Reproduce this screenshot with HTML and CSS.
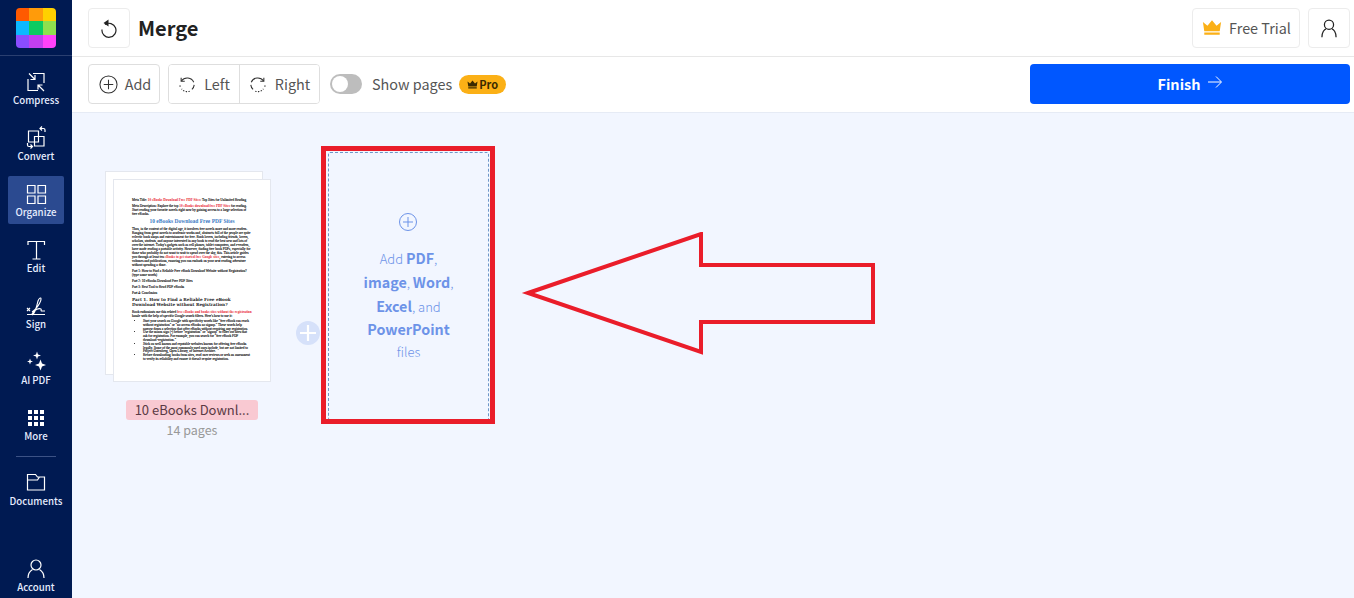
FILE: index.html
```html
<!DOCTYPE html>
<html lang="en">
<head>
    <meta charset="UTF-8">
    <title>Merge</title>
    <link rel="stylesheet" href="styles.css">
</head>
<body>
    <aside class="sidebar">
        <div class="logo-wrap">
            <div class="logo">
                <i class="c1"></i><i class="c2"></i><i class="c3"></i>
                <i class="c4"></i><i class="c5"></i><i class="c6"></i>
                <i class="c7"></i><i class="c8"></i><i class="c9"></i>
            </div>
        </div>
        <nav class="nav">
            <a class="nav-item">
                <svg width="24" height="24" viewBox="0 0 24 24" fill="none" stroke="#fff" stroke-width="1.2"><path d="M9 3.500H20V13M4 9V20.500H14"/><path d="M5 3.500L11 9.500M11 5V9.500H6.500M20 21L14 15M14 19.500V15H18.500"/></svg>
                <span>Compress</span>
            </a>
            <a class="nav-item">
                <svg width="24" height="24" viewBox="0 0 24 24" fill="none" stroke="#fff" stroke-width="1.2"><path d="M4.500 5h10v11h-10zM10.500 10.500h9.500v9.500h-9.500z"/><path d="M18 0.500l-2 2 2 2M16 2.500h3.500q1.500 0 1.500 1.500v2M3.500 17v2q0 1.500 1.500 1.500h3.500M6.500 18.500l2 2-2 2"/></svg>
                <span>Convert</span>
            </a>
            <a class="nav-item active">
                <svg width="24" height="24" viewBox="0 0 24 24" fill="none" stroke="#fff" stroke-width="1.2"><path d="M3.500 3.500h7.500v7.500H3.500zM14 3.500h7.500v7.500H14zM3.500 14H11v7.500H3.500zM14 14h7.500v7.500H14z"/></svg>
                <span>Organize</span>
            </a>
            <a class="nav-item">
                <svg width="24" height="24" viewBox="0 0 24 24" fill="none" stroke="#fff" stroke-width="1.2"><path d="M4 7V3.500h16.500V7M12.500 3.500V21M8.500 21h8"/></svg>
                <span>Edit</span>
            </a>
            <a class="nav-item">
                <svg width="24" height="24" viewBox="0 0 24 24" fill="none" stroke="#fff" stroke-width="1.1"><path d="M3 14l3 3M6 14l-3 3M8 18c4-2 9-10 9-13 0-2-2-1-3 2-1 4-2 9-4 12-1 2-2 2-2 1 3-5 7-6 9-5 1 .500-1 2 1 2h3M3 20.500h18"/></svg>
                <span>Sign</span>
            </a>
            <a class="nav-item">
                <svg width="24" height="24" viewBox="0 0 24 24" fill="#fff"><path d="M13 1.500l1 3 3 1-3 1-1 3-1-3-3-1 3-1zM6 8.500l.8 2.200 2.200.8-2.200.8L6 14.500l-.8-2.200-2.200-.8 2.200-.8zM16.500 9.500l1.500 4 4 1.500-4 1.500-1.500 4-1.500-4-4-1.500 4-1.500z"/></svg>
                <span>AI PDF</span>
            </a>
            <a class="nav-item">
                <svg width="24" height="24" viewBox="0 0 24 24" fill="#fff"><path d="M4 4h4v4H4zM10 4h4v4h-4zM16 4h4v4h-4zM4 10h4v4H4zM10 10h4v4h-4zM16 10h4v4h-4zM4 16h4v4H4zM10 16h4v4h-4zM16 16h4v4h-4z"/></svg>
                <span>More</span>
            </a>
        </nav>
        <div class="nav-divider"></div>
        <a class="nav-item docs">
            <svg width="24" height="24" viewBox="0 0 24 24" fill="none" stroke="#fff" stroke-width="1.2"><path d="M3.500 20V4.500h8l2 2.500h7v13zM3.500 10h10l2-3"/></svg>
            <span>Documents</span>
        </a>
        <a class="nav-item account">
            <svg width="24" height="24" viewBox="0 0 24 24" fill="none" stroke="#fff" stroke-width="1.200"><circle cx="12" cy="8" r="5"/><path d="M4 21c0-4.500 2-7 4.500-8.500M20 21c0-4.500-2-7-4.500-8.500"/></svg>
            <span>Account</span>
        </a>
    </aside>

    <div class="content">
        <header class="topbar">
            <button class="square-btn">
                <svg width="20" height="20" viewBox="0 0 20 20" fill="none" stroke="#222" stroke-width="1.200"><path d="M6 6.500a7 7 0 1 1-3 5"/><path d="M9.500 1.500v7L4.500 5z" fill="#222" stroke="none"/></svg>
            </button>
            <h1>Merge</h1>
            <div class="spacer"></div>
            <button class="trial-btn">
                <svg width="20" height="17" viewBox="0 0 22 18" fill="#fbb016"><path d="M1 3l5 4 5-6 5 6 5-4-1.500 10h-17zM2.500 14.500h17V17h-17z"/></svg>
                Free Trial
            </button>
            <button class="square-btn">
                <svg width="20" height="20" viewBox="0 0 24 24" fill="none" stroke="#222" stroke-width="1.500"><circle cx="12" cy="8" r="5.500"/><path d="M3.500 23c0-6 3-9.500 5-10M20.500 23c0-6-3-9.500-5-10"/></svg>
            </button>
        </header>

        <div class="toolbar">
            <button class="tool-btn add-btn">
                <svg width="19" height="19" viewBox="0 0 20 20" fill="none" stroke="#333" stroke-width="1.100"><circle cx="10" cy="10" r="9"/><path d="M10 5v10M5 10h10"/></svg>
                <span class="lbl">Add</span>
            </button>
            <div class="btn-group">
                <button class="tool-btn">
                    <svg width="18" height="18" viewBox="0 0 20 20" fill="none" stroke="#333" stroke-width="1.200"><path d="M3.500 3v4h4" /><path d="M3.800 6.500A8 8 0 0 1 17.500 8M18 11a8 8 0 0 1-2.500 5" /><path d="M13 18a8 8 0 0 1-9-2.500M2.500 13a8 8 0 0 1-.500-3" stroke-dasharray="1.500 1.500"/></svg>
                    <span class="lbl">Left</span>
                </button>
                <button class="tool-btn">
                    <svg width="18" height="18" viewBox="0 0 20 20" fill="none" stroke="#333" stroke-width="1.200"><path d="M16.500 3v4h-4"/><path d="M16.200 6.500A8 8 0 0 0 2.500 8M2 11a8 8 0 0 0 2.500 5"/><path d="M7 18a8 8 0 0 0 9-2.500M17.500 13a8 8 0 0 0 .500-3" stroke-dasharray="1.500 1.500"/></svg>
                    <span class="lbl">Right</span>
                </button>
            </div>
            <span class="toggle"><span class="knob"></span></span>
            <span class="toggle-label lbl">Show pages</span>
            <span class="pro-badge">
                <svg width="11" height="9" viewBox="0 0 22 18" fill="#3a2a00"><path d="M1 3l5 4 5-6 5 6 5-4-1.500 10h-17zM2.500 14.500h17V17h-17z"/></svg>Pro
            </span>
            <div class="spacer"></div>
            <button class="finish-btn">
                <span class="lbl">Finish</span>
                <svg width="16" height="14" viewBox="0 0 16 14" fill="none" stroke="#fff" stroke-width="1"><path d="M1 7h13M9 1.500L14.500 7 9 12.500"/></svg>
            </button>
        </div>

        <main class="workspace">
            <div class="file-card">
                <div class="sheets">
                    <div class="sheet-back"></div>
                    <div class="sheet-front">
                        <p>Meta Title: <b class="hl">10 eBooks Download Free PDF Sites</b>: Top Sites for Unlimited Reading</p>
                        <p>Meta Description: Explore the top <b class="hl">10 eBooks download free PDF Sites</b> for reading. Start reading your favorite novels right now by gaining access to a large selection of free eBooks.</p>
                        <h2>10 eBooks Download Free PDF Sites</h2>
                        <p>Thus, in the context of the digital age, it involves free novels more and more readers. Ranging from great novels to academic works and, abstracts full of the people are quite eclectic book shops and entertainment for free. Book lovers, including friends, lovers, scholars, students, and anyone interested in any book to read the best new and lots of over the internet. Today's gadgets such as cell phones, tablet computers, and e-readers, have made reading a portable activity. However, finding free book PDFs, especially for those who probably do not want to wait to spend over the sky, this. This article guides you through at least ten <b class="hl">eBooks to get started free Google sites</b>, entering to access volumes and publications, ensuring you can embark on your next reading adventure without spending a dime.</p>
                        <p>Part 1: How to Find a Reliable Free eBook Download Website without Registration? (type some words)</p>
                        <p>Part 2: 10 eBooks Download Free PDF Sites</p>
                        <p>Part 3: Best Tool to Read PDF eBooks</p>
                        <p>Part 4: Conclusion</p>
                        <h3>Part 1. How to Find a Reliable Free eBook Download Website without Registration?</h3>
                        <p>Book enthusiasts use this related <b class="hl">free eBooks and books sites without the registration</b> hassle with the help of specific Google search filters. Here's how to use it:</p>
                        <ul>
                            <li>Start your search on Google with specificity words like "free eBook can reach without registration" or "no access eBooks no signup." These words help narrow down a selection that offer eBooks without requiring any registration.</li>
                            <li>Use the minus sign (-) before "registration" or "signup" to filter out sites that ask for registration. For example, you can search for "free eBook PDF download -registration."</li>
                            <li>Stick on well known and reputable websites known for offering free eBooks legally. Some of the most commonly used ones include, but are not limited to Project Gutenberg, Open Library, or Internet Archive.</li>
                            <li>Before downloading books from sites, read user reviews or seek an assessment to verify its reliability and ensure it doesn't require registration.</li>
                        </ul>
                    </div>
                </div>
                <div class="file-name">10 eBooks Downl...</div>
                <div class="file-pages">14 pages</div>
            </div>

            <div class="insert-dot">
                <svg width="16" height="16" viewBox="0 0 16 16" stroke="#fff" stroke-width="2.200"><path d="M8 0v16M0 8h16"/></svg>
            </div>

            <div class="drop-box">
                <svg class="drop-plus" width="20" height="20" viewBox="0 0 20 20" fill="none" stroke="#6d93e8" stroke-width="1"><circle cx="10" cy="10" r="8.500"/><path d="M10 5v10M5 10h10"/></svg>
                <p>Add <b>PDF</b>,</p>
                <p><b>image</b>, <b>Word</b>,</p>
                <p><b>Excel</b>, and</p>
                <p><b>PowerPoint</b></p>
                <p class="files">files</p>
            </div>

            <div class="mark-box"></div>
            <svg class="mark-arrow" width="360" height="130" viewBox="0 0 360 130" fill="none" stroke="#ea1d2a" stroke-width="4"><path d="M13 61L186 2V33H358V90H186V120z"/></svg>
        </main>
    </div>
</body>
</html>
```

FILE: styles.css
```css
* { box-sizing: border-box; }
html, body { height: 100%; }
body { margin: 0; display: flex; height: 598px; overflow: hidden; font-family: "Noto Sans CJK SC", "Noto Sans", sans-serif; color: #444; background: #f2f6ff; }
button { font-family: inherit; cursor: pointer; }
.lbl { margin-top: -2px; }

.sidebar { width: 72px; flex: none; background: #001a52; display: flex; flex-direction: column; align-items: center; }
.logo-wrap { width: 100%; height: 56px; padding: 8px 16px 0; border-bottom: 1px solid #2a3f70; }
.logo { width: 40px; height: 40px; display: grid; grid-template-columns: repeat(3, 1fr); grid-template-rows: repeat(3, 1fr); border-radius: 4px; overflow: hidden; }
.c1 { background: #ff5a00; } .c2 { background: #ff9b0a; } .c3 { background: #ffd000; }
.c4 { background: #0cb8ff; } .c5 { background: #0ccb62; } .c6 { background: #8ee04e; }
.c7 { background: #8a4dff; } .c8 { background: #c23ff0; } .c9 { background: #ff42fa; }

.nav { display: flex; flex-direction: column; gap: 8px; margin-top: 8px; }
.nav-item { width: 56px; height: 48px; padding-top: 6px; display: flex; flex-direction: column; align-items: center; border-radius: 2px; color: #e6edff; font-size: 9.700px; line-height: 14px; font-weight: 500; white-space: nowrap; }
.nav-item span { margin-top: -1px; }
.nav-item.active { background: #2b4a90; }
.nav-divider { width: 40px; height: 1px; background: #3c5285; margin-top: 8px; }
.docs { margin-top: 7px; }
.docs span { margin-top: 0; }
.account { margin-top: auto; height: 47px; }

.content { flex: 1; min-width: 0; display: flex; flex-direction: column; }
.topbar { height: 57px; flex: none; background: #fff; border-bottom: 1px solid #e8e8e8; display: flex; align-items: center; padding: 0 4px 1px 16px; }
.topbar h1 { margin: 0 0 0 8px; font-size: 20px; font-weight: 700; color: #222; }
.spacer { flex: 1; }
.square-btn { width: 42px; height: 40px; padding: 0; border: 1px solid #ececec; border-radius: 4px; background: #fff; display: flex; align-items: center; justify-content: center; }
.trial-btn { width: 108px; height: 40px; margin-right: 8px; padding: 0 0 0 1px; border: 1px solid #ececec; border-radius: 4px; background: #fff; display: flex; align-items: center; justify-content: center; gap: 7px; font-size: 14.400px; color: #555; }

.toolbar { height: 56px; flex: none; background: #fff; border-bottom: 1px solid #e6ebf5; box-shadow: 0 1px 2px rgba(60, 90, 160, 0.08); display: flex; align-items: center; padding: 0 4px 1px 16px; }
.tool-btn { height: 40px; padding: 0; border: 0; background: #fff; display: flex; align-items: center; justify-content: center; gap: 7px; font-size: 14.400px; color: #555; }
.add-btn { width: 72px; margin-right: 8px; padding-left: 2px; border: 1px solid #dedede; border-radius: 4px; }
.btn-group { display: flex; border: 1px solid #dedede; border-radius: 4px; overflow: hidden; height: 40px; }
.btn-group .tool-btn { height: 38px; width: 70px; gap: 8px; }
.btn-group .tool-btn + .tool-btn { width: 80px; border-left: 1px solid #dedede; }
.toggle { width: 32px; height: 20px; margin-left: 10px; background: #bdbdbd; border-radius: 10px; padding: 2px; }
.knob { display: block; width: 16px; height: 16px; background: #fff; border-radius: 50%; }
.toggle-label { margin-left: 10px; font-size: 14.400px; color: #555; }
.pro-badge { margin-left: 7px; width: 47px; height: 19px; background: #fbb016; border-radius: 10px; display: flex; align-items: center; justify-content: center; gap: 1px; font-size: 11px; font-weight: 700; color: #3a2a00; }
.finish-btn { width: 320px; height: 40px; border: 0; border-radius: 4px; background: #0057ff; color: #fff; font-size: 14.500px; font-weight: 700; display: flex; align-items: center; justify-content: center; gap: 6px; }
.finish-btn svg { margin-bottom: 4px; }

.workspace { flex: 1; position: relative; display: flex; align-items: flex-start; padding: 39px 0 0 33px; background: #f2f6ff; }
.file-card { width: 166px; padding-top: 19px; display: flex; flex-direction: column; align-items: center; }
.sheets { position: relative; width: 166px; height: 211px; }
.sheet-back { position: absolute; left: 0; top: 0; width: 158px; height: 204px; background: #fff; border: 1px solid #e4e7ee; }
.sheet-front { position: absolute; left: 8px; top: 8px; width: 158px; height: 203px; background: #fff; border: 1px solid #e4e7ee; padding: 18px 18px 0 18px; font-family: "Liberation Serif", serif; font-size: 3.400px; line-height: 4px; color: #000; overflow: hidden; -webkit-text-stroke: 0.1px #000; }
.sheet-front p { margin: 0 0 2px; }
.sheet-front b { font-weight: 700; -webkit-text-stroke: 0; }
.hl { color: #e8182c; }
.sheet-front h2 { margin: 2px 0 2px; text-align: center; font-size: 5.500px; line-height: 7px; color: #3e7cc4; -webkit-text-stroke: 0; }
.sheet-front h3 { margin: 0 0 3px; font-family: "DejaVu Serif", serif; font-size: 4.200px; line-height: 5px; font-weight: 700; color: #222; -webkit-text-stroke: 0; }
.sheet-front ul { margin: 0; padding-left: 11px; line-height: 3.800px; }
.file-name { width: 132px; height: 20px; margin: 18px 0 0 8px; background: #f9c9d2; border-radius: 3px; text-align: center; font-size: 13px; line-height: 20px; color: #5a3a44; white-space: nowrap; overflow: hidden; }
.file-pages { margin: 0 0 0 8px; font-size: 12.500px; line-height: 20px; color: #999; }

.insert-dot { width: 24px; height: 24px; margin: 169px 0 0 25px; flex: none; border-radius: 50%; background: #d6e1fa; display: flex; align-items: center; justify-content: center; }
.drop-box { width: 161px; height: 268px; margin: 0 0 0 8px; border: 1px dashed #6f97c8; border-radius: 2px; text-align: center; color: #6d93e8; font-size: 13px; padding-top: 59px; }
.drop-plus { display: block; margin: 0 0 14px 69px; }
.drop-box p { margin: 0; height: 23.800px; line-height: 24px; font-weight: 300; }
.drop-box b { font-size: 14.300px; font-weight: 700; }
.drop-box .files { height: 20px; margin-top: 1px; line-height: 20px; }

.mark-box { position: absolute; left: 249px; top: 33px; width: 174px; height: 278px; border: 5px solid #ea1d2a; }
.mark-arrow { position: absolute; left: 443px; top: 119px; }
```
